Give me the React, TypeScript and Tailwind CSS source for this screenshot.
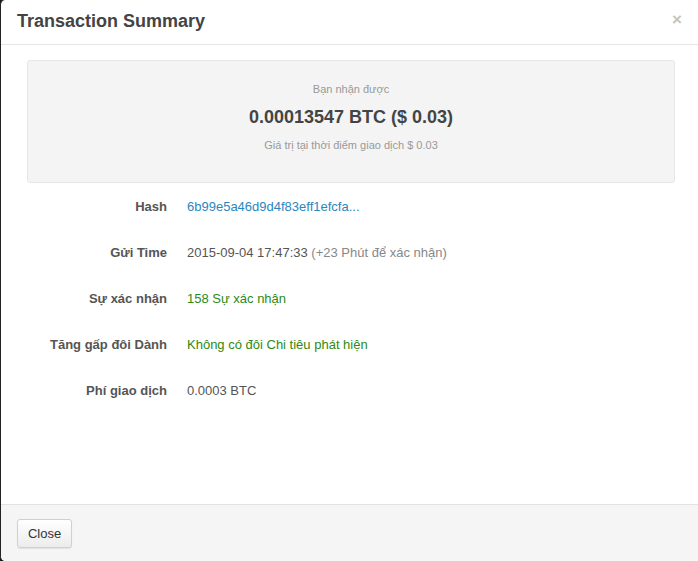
const rows = [
  { label: "Hash", value: "6b99e5a46d9d4f83eff1efcfa...", tone: "text-[#2a87bd]" },
  { label: "Gửi Time", value: "2015-09-04 17:47:33", extra: " (+23 Phút để xác nhận)", tone: "text-[#555]" },
  { label: "Sự xác nhận", value: "158 Sự xác nhận", tone: "text-[#2d8a14]" },
  { label: "Tăng gấp đôi Dành", value: "Không có đôi Chi tiêu phát hiện", tone: "text-[#2d8a14]" },
  { label: "Phí giao dịch", value: "0.0003 BTC", tone: "text-[#555]" },
];

export default function App() {
  return (
    <div className="w-[698px] h-[561px] overflow-hidden bg-[#1a1a1a] font-['Liberation_Sans',Arial,sans-serif]">
      <div className="w-[720px] h-[561px] flex flex-col bg-white border-l border-[#222] rounded-[5px] overflow-hidden">
        <div className="h-[45px] flex items-center justify-between border-b border-[#e5e5e5] pl-[16px] pr-[38px]">
          <h4 className="text-[18px] font-bold text-[#444] mt-[-2px]">Transaction Summary</h4>
          <span className="text-[17px] font-bold text-[#c4c4c4] leading-none mt-[-6px]">×</span>
        </div>

        <div className="flex-1 pt-[15px] pl-[26px] w-[698px]">
          <div className="w-[648px] h-[123px] bg-[#f4f4f4] border border-[#e6e6e6] rounded-[3px] flex flex-col items-center pt-[20px]">
            <p className="text-[11px] text-[#999]">Bạn nhận được</p>
            <p className="text-[18px] font-bold text-[#444] mt-[6px]">0.00013547 BTC ($ 0.03)</p>
            <p className="text-[11px] text-[#999] mt-[6px]">Giá trị tại thời điểm giao dịch $ 0.03</p>
          </div>

          <div className="flex flex-col gap-[30px] mt-[16px]">
            {rows.map((row) => (
              <div key={row.label} className="flex items-center h-[16px] text-[13px]">
                <div className="w-[140px] text-right font-bold text-[#555]">{row.label}</div>
                <div className={`ml-[20px] ${row.tone}`}>
                  {row.value}
                  {row.extra && <span className="text-[#888]">{row.extra}</span>}
                </div>
              </div>
            ))}
          </div>
        </div>

        <div className="h-[57px] bg-[#f5f5f5] border-t border-[#e2e2e2] flex items-center pl-[16px]">
          <button className="h-[29px] w-[55px] rounded-[3px] border border-[#d0d0d0] bg-gradient-to-b from-white to-[#ececec] text-[13px] text-[#333] shadow-[0_1px_1px_rgba(0,0,0,0.08)] mt-[1px]">
            Close
          </button>
        </div>
      </div>
    </div>
  );
}
